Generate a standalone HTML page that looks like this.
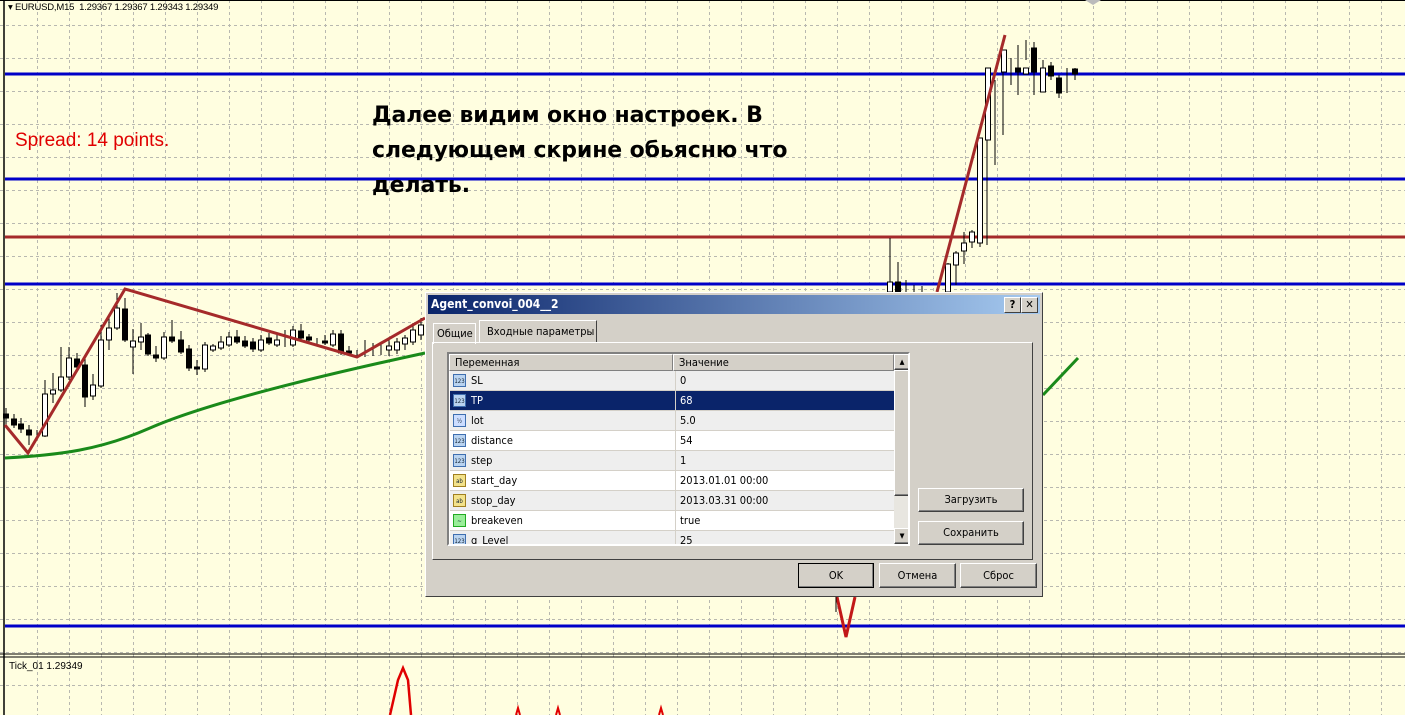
<!DOCTYPE html>
<html><head><meta charset="utf-8"><style>
body{margin:0;width:1405px;height:715px;overflow:hidden;background:#fffee0;font-family:Tahoma,"DejaVu Sans","Liberation Sans",sans-serif;position:relative}
.t{position:absolute;white-space:nowrap}
.dlg{position:absolute;left:425px;top:292px;width:618px;height:305px;background:#d4d0c8;border:1px solid #fff;border-right-color:#404040;border-bottom-color:#404040;box-sizing:border-box;font-size:11px;font-family:"DejaVu Sans Condensed","Liberation Sans",sans-serif}
.title{position:absolute;left:2px;top:2px;right:2px;height:19px;background:linear-gradient(90deg,#0a246a,#a6caf0);color:#fff;font-weight:bold;font-size:12px;line-height:19px;padding-left:3px}
.tb{position:absolute;top:2px;width:15px;height:14px;background:#d4d0c8;border:1px solid #fff;border-right-color:#404040;border-bottom-color:#404040;color:#000;font-size:11px;line-height:13px;text-align:center;font-weight:bold}
.btn{position:absolute;background:#d4d0c8;border:1px solid #fff;border-right-color:#404040;border-bottom-color:#404040;box-shadow:inset -1px -1px #808080;text-align:center;font-size:11px;box-sizing:border-box}
.row{position:absolute;left:1px;width:444px;height:20px;border-bottom:1px solid #d4d0c8;box-sizing:border-box;line-height:19px}
.row span{position:absolute;left:225px;border-left:1px solid #d4d0c8;padding-left:4px;height:20px;top:0}
.ic{position:absolute;left:3px;top:3px;width:13px;height:13px;border:1px solid #3f6fb0;background:#b9d3f0;font-size:6px;line-height:13px;text-align:center;color:#123;box-sizing:border-box}
</style></head><body>
<svg width="1405" height="715" style="position:absolute;left:0;top:0">
<g stroke="#b8b8b0" stroke-dasharray="3,3" stroke-width="1">
<path d="M37.5 0V715M69.5 0V715M101.5 0V715M133.5 0V715M165.5 0V715M197.5 0V715M229.5 0V715M261.5 0V715M293.5 0V715M325.5 0V715M357.5 0V715M389.5 0V715M421.5 0V715M453.5 0V715M485.5 0V715M517.5 0V715M549.5 0V715M581.5 0V715M613.5 0V715M645.5 0V715M677.5 0V715M709.5 0V715M741.5 0V715M773.5 0V715M805.5 0V715M837.5 0V715M869.5 0V715M901.5 0V715M933.5 0V715M965.5 0V715M997.5 0V715M1029.5 0V715M1061.5 0V715M1093.5 0V715M1125.5 0V715M1157.5 0V715M1189.5 0V715M1221.5 0V715M1253.5 0V715M1285.5 0V715M1317.5 0V715M1349.5 0V715M1381.5 0V715"/>
<path d="M0 25.5H1405M0 58.5H1405M0 91.5H1405M0 124.5H1405M0 157.5H1405M0 190.5H1405M0 223.5H1405M0 256.5H1405M0 289.5H1405M0 322.5H1405M0 355.5H1405M0 388.5H1405M0 421.5H1405M0 454.5H1405M0 487.5H1405M0 520.5H1405M0 553.5H1405M0 586.5H1405M0 619.5H1405M0 652.5H1405M0 685.5H1405"/>
</g>
<path d="M0 0.5H1405" stroke="#000"/>
<path d="M4 0V715" stroke="#000" stroke-width="1.5"/>
<path d="M0 654H1405M0 657H1405" stroke="#000"/>
<g stroke="#0000c8" stroke-width="3"><path d="M5 74H1405M5 179H1405M5 284H1405M5 626H1405"/></g>
<path d="M5 237H1405" stroke="#a52a2a" stroke-width="3"/>
<path d="M5 458 C60 455 100 450 150 428 S300 380 425 353" stroke="#1a8a1a" stroke-width="3" fill="none"/>
<path d="M1043 395 L1078 358" stroke="#1a8a1a" stroke-width="3"/>
<g stroke="#000" stroke-width="1">
<path d="M6 408V425M14 414V428M21 418V433M29 425V445M37 430V440M45 380V437M53 373V403M61 347V392M69 347V380M77 353V370M85 355V407M93 374V400M101 325V388M109 318V350M117 293V330M125 298V342M133 329V374M141 323V350M148 333V356M156 346V362M164 332V360M172 320V343M181 331V354M189 345V371M197 360V375M205 342V372M213 344V352M221 336V350M229 332V347M237 330V344M245 336V348M253 338V352M261 335V352M269 333V345M277 335V347M285 330V347M293 326V347M301 324V340M309 334V342M317 338V344M325 335V345M333 330V347M341 330V355M349 346V356M357 350V357M365 340V357M373 343V356M381 344V355M389 340V356M397 338V354M405 335V350M413 323V345M421 318V340M890 238V292M898 262V292M906 280V292M914 285V292M922 286V292M938 286V292M948 263V292M956 251V285M964 232V264M972 230V248M980 227V247M987 122V245M995 80V165M1003 60V135M1011 58V85M1018 45V95M1026 40V60M1034 42V95M1043 60V85M1051 62V80M1059 75V98M1067 68V93M1075 68V80"/>
<g fill="#000">
<rect x="3.5" y="414" width="5" height="4"/><rect x="11.5" y="419" width="5" height="6"/><rect x="18.5" y="424" width="5" height="5"/><rect x="26.5" y="430" width="5" height="5"/>
<rect x="74.5" y="359" width="5" height="8"/><rect x="82.5" y="365" width="5" height="32"/><rect x="122.5" y="309" width="5" height="31"/><rect x="145.5" y="335" width="5" height="19"/><rect x="153.5" y="355" width="5" height="3"/><rect x="169.5" y="337" width="5" height="4"/><rect x="178.5" y="340" width="5" height="12"/><rect x="186.5" y="349" width="5" height="19"/><rect x="194.5" y="367" width="5" height="2"/>
<rect x="234.5" y="337" width="5" height="5"/><rect x="242.5" y="341" width="5" height="5"/><rect x="250.5" y="342" width="5" height="7"/><rect x="266.5" y="338" width="5" height="5"/><rect x="298.5" y="331" width="5" height="7"/><rect x="306.5" y="337" width="5" height="3"/><rect x="322.5" y="341" width="5" height="2"/><rect x="338.5" y="334" width="5" height="19"/><rect x="346.5" y="351" width="5" height="2"/>
<rect x="895.5" y="282" width="5" height="10"/><rect x="1015.5" y="68" width="5" height="4"/><rect x="1031.5" y="48" width="5" height="24"/><rect x="1048.5" y="66" width="5" height="10"/><rect x="1056.5" y="78" width="5" height="15"/><rect x="1072.5" y="69" width="5" height="5"/>
</g>
<g fill="#fff">
<rect x="42.5" y="394" width="5" height="42"/><rect x="50.5" y="390" width="5" height="4"/><rect x="58.5" y="377" width="5" height="13"/><rect x="66.5" y="358" width="5" height="19"/><rect x="90.5" y="385" width="5" height="11"/><rect x="98.5" y="340" width="5" height="46"/><rect x="106.5" y="328" width="5" height="12"/><rect x="114.5" y="308" width="5" height="20"/><rect x="130.5" y="341" width="5" height="6"/><rect x="138.5" y="337" width="5" height="5"/><rect x="161.5" y="337" width="5" height="21"/>
<rect x="202.5" y="345" width="5" height="24"/><rect x="210.5" y="346" width="5" height="4"/><rect x="218.5" y="342" width="5" height="6"/><rect x="226.5" y="337" width="5" height="8"/><rect x="258.5" y="340" width="5" height="10"/><rect x="274.5" y="340" width="5" height="5"/><rect x="290.5" y="330" width="5" height="15"/><rect x="330.5" y="334" width="5" height="11"/><rect x="386.5" y="346" width="5" height="4"/><rect x="394.5" y="342" width="5" height="8"/><rect x="402.5" y="338" width="5" height="6"/><rect x="410.5" y="330" width="5" height="12"/><rect x="418.5" y="325" width="5" height="10"/>
<rect x="887.5" y="282" width="5" height="10"/><rect x="945.5" y="264" width="5" height="28"/><rect x="953.5" y="253" width="5" height="12"/><rect x="961.5" y="243" width="5" height="8"/><rect x="969.5" y="232" width="5" height="10"/><rect x="977.5" y="138" width="5" height="105"/><rect x="985.5" y="68" width="5" height="72"/><rect x="1001.5" y="50" width="5" height="22"/><rect x="1023.5" y="68" width="5" height="6"/><rect x="1040.5" y="68" width="5" height="24"/>
</g>
</g>
<path d="M5 425 L28 453 L125 289 L357 357 L425 318" stroke="#a52a2a" stroke-width="3" fill="none"/>
<path d="M937 292 L1005 35" stroke="#a52a2a" stroke-width="3"/>
<path d="M837 597 L846 637 L855 597" stroke="#c21818" stroke-width="3" fill="none"/>
<path d="M836 597V612" stroke="#000"/>
<path d="M390 715 L398 680 L403 668 L408 680 L411 715" stroke="#e00000" stroke-width="2.5" fill="none"/>
<path d="M516 715 L518 708 L520 715M556 715 L558 708 L560 715M659 715 L661 708 L663 715" stroke="#e00000" stroke-width="2" fill="none"/>
<path d="M1085 0 L1093 5 L1101 0Z" fill="#bbb"/>
</svg>
<div class="t" style="left:8px;top:2px;font-size:9.5px;letter-spacing:-0.2px;font-family:'Liberation Sans',sans-serif">&#9662; EURUSD,M15&nbsp; 1.29367 1.29367 1.29343 1.29349</div>
<div class="t" style="left:15px;top:130px;font-size:19px;color:#e00000;font-family:'Liberation Sans',sans-serif">Spread: 14 points.</div>
<div class="t" style="left:372px;top:98px;font-size:22px;font-weight:bold;line-height:35px;font-family:'DejaVu Sans',sans-serif;letter-spacing:-0.1px">Далее видим окно настроек. В<br>следующем скрине обьясню что<br>делать.</div>
<div class="t" style="left:9px;top:661px;font-size:10px;font-family:'Liberation Sans',sans-serif">Tick_01 1.29349</div>

<div class="dlg">
<div class="title">Agent_convoi_004__2<div class="tb" style="right:19px">?</div><div class="tb" style="right:2px">✕</div></div>
<div class="t" style="left:7px;top:30px;width:38px;height:20px;border:1px solid #fff;border-bottom:none;line-height:20px;padding-left:3px">Общие</div>
<div class="t" style="left:53px;top:27px;width:118px;height:23px;border:1px solid #fff;border-right-color:#404040;border-bottom:none;background:#d4d0c8;line-height:22px;padding-left:7px;box-sizing:border-box">Входные параметры</div>
<div style="position:absolute;left:6px;top:49px;width:601px;height:218px;border:1px solid #fff;border-right-color:#404040;border-bottom-color:#404040;box-sizing:border-box"></div>
<div style="position:absolute;left:21px;top:59px;width:463px;height:194px;border:2px solid #808080;border-right-color:#fff;border-bottom-color:#fff;background:#fff;overflow:hidden;box-sizing:border-box">
<div style="position:absolute;left:0;top:0;width:224px;height:17px;border:1px solid #fff;border-right-color:#808080;border-bottom-color:#808080;background:#d4d0c8;line-height:16px;padding-left:5px;box-sizing:border-box">Переменная</div>
<div style="position:absolute;left:224px;top:0;width:221px;height:17px;border:1px solid #fff;border-right-color:#808080;border-bottom-color:#808080;background:#d4d0c8;line-height:16px;padding-left:5px;box-sizing:border-box">Значение</div>
<div class="row" style="top:17px;background:#eee"><div class="ic">123</div><b style="font-weight:normal;margin-left:21px">SL</b><span>0</span></div>
<div class="row" style="top:37px;background:#0a246a;color:#fff"><div class="ic">123</div><b style="font-weight:normal;margin-left:21px">TP</b><span>68</span></div>
<div class="row" style="top:57px;background:#eee"><div class="ic" style="background:#cdf;">½</div><b style="font-weight:normal;margin-left:21px">lot</b><span>5.0</span></div>
<div class="row" style="top:77px;background:#fff"><div class="ic">123</div><b style="font-weight:normal;margin-left:21px">distance</b><span>54</span></div>
<div class="row" style="top:97px;background:#eee"><div class="ic">123</div><b style="font-weight:normal;margin-left:21px">step</b><span>1</span></div>
<div class="row" style="top:117px;background:#fff"><div class="ic" style="background:#f3e28a;border-color:#a08020">ab</div><b style="font-weight:normal;margin-left:21px">start_day</b><span>2013.01.01 00:00</span></div>
<div class="row" style="top:137px;background:#eee"><div class="ic" style="background:#f3e28a;border-color:#a08020">ab</div><b style="font-weight:normal;margin-left:21px">stop_day</b><span>2013.03.31 00:00</span></div>
<div class="row" style="top:157px;background:#fff"><div class="ic" style="background:#9e9;border-color:#2a2">~</div><b style="font-weight:normal;margin-left:21px">breakeven</b><span>true</span></div>
<div class="row" style="top:177px;background:#eee"><div class="ic">123</div><b style="font-weight:normal;margin-left:21px">g_Level</b><span>25</span></div>
<div style="position:absolute;left:445px;top:0;width:16px;height:190px;background:#e8e6e0">
<div class="btn" style="left:0;top:0;width:16px;height:16px;font-size:7px;line-height:14px">▲</div>
<div class="btn" style="left:0;top:16px;width:16px;height:126px"></div>
<div class="btn" style="left:0;top:174px;width:16px;height:16px;font-size:7px;line-height:14px">▼</div></div>
</div>
<div class="btn" style="left:492px;top:195px;width:106px;height:24px;line-height:22px">Загрузить</div>
<div class="btn" style="left:492px;top:228px;width:106px;height:24px;line-height:22px">Сохранить</div>
<div class="btn" style="left:372px;top:270px;width:76px;height:25px;line-height:23px;border:1px solid #000">OK</div>
<div class="btn" style="left:453px;top:270px;width:77px;height:25px;line-height:23px">Отмена</div>
<div class="btn" style="left:534px;top:270px;width:77px;height:25px;line-height:23px">Сброс</div>
</div>
</body></html>
